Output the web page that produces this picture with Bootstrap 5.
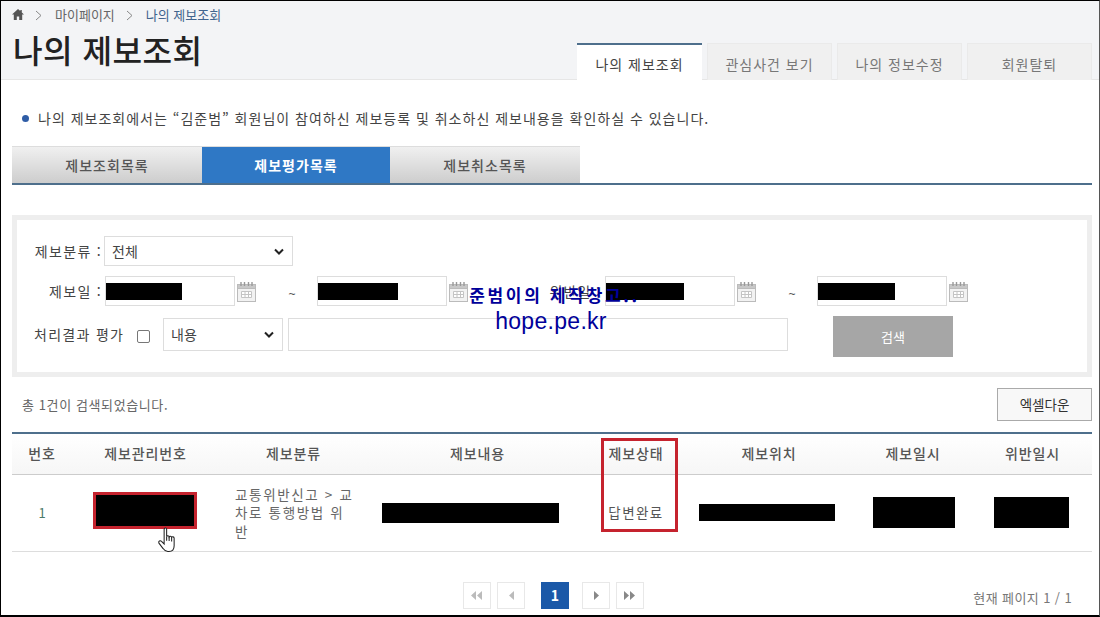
<!DOCTYPE html>
<html lang="ko">
<head>
<meta charset="UTF-8">
<title>나의 제보조회</title>
<link href="https://cdn.jsdelivr.net/npm/bootstrap@5.3.0/dist/css/bootstrap.min.css" rel="stylesheet">
<style>
html, body { margin: 0; height: 617px; overflow: hidden; background: #fff; }
body { font-family: "Noto Sans CJK KR", "Noto Sans", sans-serif; font-size: 14px; color: #444; }
.shot { height: 617px; border: 1px solid #000; border-right-color: #555; border-bottom-width: 2px; overflow: hidden; }

.top-head { height: 79px; background: #f3f4f6; border-bottom: 1px solid #e6e6e6; padding: 0 7px 0 11px; }
.crumbs { height: 27px; font-size: 13px; color: #666; padding-top: 4px; }
.crumbs .here { color: #41648e; }
.crumb-sep { margin: 5px 13px 0 11px; }
.page-title { font-size: 32.2px; font-weight: 500; color: #222; margin: 0; padding-left: 1px; line-height: 42px; letter-spacing: .4px; }
.top-tabs { gap: 5px; margin-top: 42px; }
.top-tab { width: 125px; height: 37px; background: #f0f0f0; border: 1px solid #eaeaea; border-bottom: 0; color: #777; font-size: 14px; letter-spacing: 1px; display: flex; align-items: center; justify-content: center; padding-top: 4px; text-decoration: none; }
.top-tab.on { background: #fff; border: 0; border-top: 2px solid #4e6f8c; color: #444; height: 38px; padding-top: 3px; }

.notice { margin: 26px 0 0 21px; height: 24px; font-size: 14px; letter-spacing: 1px; color: #444; }
.dot { width: 7px; height: 7px; border-radius: 50%; background: #2f5da6; margin-right: 9px; }

.sub-tabs { margin: 16px 7px 0 11px; border-bottom: 2px solid #4e6f8c; height: 39px; }
.sub-tab { width: 190px; height: 37px; background: linear-gradient(#f0f0f0, #cdcdcd); border-top: 1px solid #ddd; color: #555; font-size: 14px; font-weight: 500; letter-spacing: 1px; display: flex; align-items: center; justify-content: center; text-decoration: none; }
.sub-tab.on { width: 188px; background: #2f78c5; color: #fff; font-weight: 700; }

.search-box { margin: 30px 7px 0 11px; height: 162px; border: 5px solid #eee; padding: 16px 0 0 17px; font-size: 14px; color: #444; }
.field-row { height: 30px; margin-bottom: 10px; }
.field-row.tall { height: 37px; }
.field-label { width: 68px; margin-right: 3px; text-align: right; white-space: nowrap; letter-spacing: 1.300px; }
.field-label.wide { width: 103px; margin-right: 0; text-align: left; }
.search-box .form-select, .search-box .form-control { border-radius: 0; border-color: #ddd; font-size: 14px; color: #444; box-shadow: none; padding: 0 24px 0 7px; }
.search-box .form-select { background-image: url("data:image/svg+xml,%3Csvg xmlns='http://www.w3.org/2000/svg' viewBox='0 0 10 7'%3E%3Cpath d='M1 1.500l4 4 4-4' fill='none' stroke='%23222' stroke-width='2'/%3E%3C/svg%3E"); background-size: 10px 7px; background-position: right 8px center; }
.pick-kind { width: 189px; height: 30px; margin-left: -1px; }
.pick-text { width: 120px; height: 33px; margin-left: -1px; }
.search-box .form-check-input { width: 13px; height: 13px; margin: 3px 14px 0 0; border-radius: 2px; border-color: #777; flex: none; }
.word-input { width: 500px; height: 33px; margin-left: 5px; }
.date-box { width: 130px; height: 30px; }
.date-box .form-control { width: 130px; height: 30px; }
.date-mask { left: 1px; top: 7px; height: 17px; background: #000; }
.m76 { width: 76px; }
.m80 { width: 80px; }
.m78 { width: 78px; }
.m77 { width: 77px; }
.cal { margin-left: 2px; flex: none; }
.tilde { width: 61px; padding-left: 11px; padding-top: 6px; text-align: center; font-family: "Liberation Sans", sans-serif; font-size: 12px; color: #555; }
.gap-label { width: 137px; padding-right: 4px; text-align: right; white-space: nowrap; letter-spacing: 1px; }
.find-btn { width: 120px; height: 41px; margin-left: 45px; align-self: flex-start; background: #a6a6a6; color: #fff; border: 0; border-radius: 0; font-size: 13px; }

.result-bar { margin: 11px 7px 0 21px; height: 33px; font-size: 13px; letter-spacing: .6px; color: #666; }
.excel-btn { width: 95px; height: 33px; padding: 0; background: #f8f8f8; border: 1px solid #aaa; border-radius: 0; color: #333; font-size: 13.500px; }

.result-table { margin: 11px 7px 0 11px; width: 1080px; table-layout: fixed; border-top: 2px solid #4e6f8c; }
.result-table th { height: 41px; padding: 0; background: linear-gradient(#fff, #f6f6f6); border-bottom: 1px solid #ccc; text-align: center; vertical-align: middle; font-size: 14px; font-weight: 500; color: #555; letter-spacing: .9px; }
.result-table td { height: 77px; padding: 0; border-bottom: 1px solid #ddd; vertical-align: middle; text-align: center; font-size: 13px; color: #666; }
.c1 { width: 60px; } .c2 { width: 147px; } .c3 { width: 149px; } .c4 { width: 219px; }
.c5 { width: 98px; } .c6 { width: 168px; } .c7 { width: 120px; } .c8 { width: 119px; }
.result-table td.kind { text-align: left; padding: 0 13px 0 16px; line-height: 18.500px; font-size: 13.500px; letter-spacing: 1.650px; word-break: break-all; }
.result-table td.num { color: #4c7a6a; }
.result-table td.state { font-size: 13.500px; letter-spacing: 1.400px; color: #555; }
.no-mask { width: 104px; height: 37px; margin: -4px 0 0 21px; background: #000; border: 3px solid #c5232e; }
.mask { background: #000; }
.mk4 { width: 177px; height: 20px; margin-left: 14px; }
.mk6 { width: 136px; height: 17px; margin-left: 14px; }
.mk7 { width: 82px; height: 31px; margin-left: 20px; }
.mk8 { width: 75px; height: 31px; margin-left: 21px; }

.pager-row { margin: 30px 7px 0 0; height: 28px; }
.pager-row .pagination { margin: 0 0 0 462px; gap: 6px; }
.pager-row .page-item .page-link { width: 28px; height: 27px; padding: 0; border-radius: 0; border: 1px solid #e8e8e8; margin: 0; color: #888; background: #fff; display: flex; align-items: center; justify-content: center; }
.pager-row .page-item.active .page-link { background: #1b59a8; border-color: #1b59a8; color: #fff; font-weight: 700; font-size: 14px; }
.pager-row .page-item.active { margin: 0 7px 0 10px; }
.page-count { margin-left: auto; padding: 5px 20px 0 0; font-size: 13px; color: #777; letter-spacing: .4px; }

/* things laid over the page afterwards */
.red-frame { left: 600px; top: 437px; width: 77px; height: 94px; border: 3px solid #c5232e; }
.hand { left: 156px; top: 526px; }
.stamp { left: 440px; top: 280px; width: 220px; text-align: center; color: #00009a; pointer-events: none; }
.stamp-ko { font-size: 17px; font-weight: 700; line-height: 27px; letter-spacing: 2.700px; white-space: nowrap; padding-left: 7px; }
.stamp-en { font-family: "Liberation Sans", sans-serif; font-size: 23px; line-height: 26px; letter-spacing: .3px; }
</style>
</head>
<body>
<svg width="0" height="0" class="position-absolute">
  <symbol id="cal" viewBox="0 0 19 21">
    <rect x=".5" y="3.5" width="18" height="17" fill="#f2f2f2" stroke="#bbb"/>
    <rect x=".5" y="3.5" width="18" height="4" fill="#c8c8c8" stroke="#bbb"/>
    <path d="M4 1v4M7.5 1v4M11.500 1v4M15 1v4" stroke="#999" stroke-width="1.400"/>
    <path d="M4.500 10.500h10v6h-10zM4.500 13.500h10M8 10.500v6M11.500 10.500v6" fill="#fff" stroke="#c4c4c4"/>
  </symbol>
</svg>

<div class="shot position-relative">
  <header class="top-head d-flex justify-content-between">
    <div>
      <div class="crumbs d-flex align-items-start">
        <svg width="12" height="11" viewBox="0 0 12 11" class="mt-1"><path d="M6 0 0 5.600h1.800V11h3V7.500h2.400V11h3V5.600H12L9.800 3.500V1H8.300v1.100z" fill="#555"/></svg>
        <svg class="crumb-sep" width="7" height="11" viewBox="0 0 7 11"><path d="M1 1l5 4.500-5 4.500" fill="none" stroke="#888"/></svg>
        <span>마이페이지</span>
        <svg class="crumb-sep" width="7" height="11" viewBox="0 0 7 11"><path d="M1 1l5 4.500-5 4.500" fill="none" stroke="#888"/></svg>
        <span class="here">나의 제보조회</span>
      </div>
      <h1 class="page-title">나의 제보조회</h1>
    </div>
    <nav class="top-tabs d-flex">
      <a class="top-tab on" href="#">나의 제보조회</a>
      <a class="top-tab" href="#">관심사건 보기</a>
      <a class="top-tab" href="#">나의 정보수정</a>
      <a class="top-tab" href="#">회원탈퇴</a>
    </nav>
  </header>

  <p class="notice d-flex align-items-center mb-0"><span class="dot"></span>나의 제보조회에서는 “김준범” 회원님이 참여하신 제보등록 및 취소하신 제보내용을 확인하실 수 있습니다.</p>

  <nav class="sub-tabs d-flex">
    <a class="sub-tab" href="#">제보조회목록</a>
    <a class="sub-tab on" href="#">제보평가목록</a>
    <a class="sub-tab" href="#">제보취소목록</a>
  </nav>

  <form class="search-box">
    <div class="field-row d-flex align-items-center">
      <label class="field-label">제보분류 :</label>
      <select class="form-select pick-kind"><option>전체</option></select>
    </div>
    <div class="field-row d-flex align-items-center">
      <label class="field-label">제보일 :</label>
      <div class="date-box position-relative"><input class="form-control" type="text"><span class="date-mask m76 position-absolute"></span></div>
      <svg class="cal" width="19" height="21"><use href="#cal"/></svg>
      <span class="tilde">~</span>
      <div class="date-box position-relative"><input class="form-control" type="text"><span class="date-mask m80 position-absolute"></span></div>
      <svg class="cal" width="19" height="21"><use href="#cal"/></svg>
      <label class="gap-label">위반일 :</label>
      <div class="date-box position-relative"><input class="form-control" type="text"><span class="date-mask m78 position-absolute"></span></div>
      <svg class="cal" width="19" height="21"><use href="#cal"/></svg>
      <span class="tilde">~</span>
      <div class="date-box position-relative"><input class="form-control" type="text"><span class="date-mask m77 position-absolute"></span></div>
      <svg class="cal" width="19" height="21"><use href="#cal"/></svg>
    </div>
    <div class="field-row tall d-flex align-items-center">
      <label class="field-label wide">처리결과 평가</label>
      <input class="form-check-input" type="checkbox">
      <select class="form-select pick-text"><option>내용</option></select>
      <input class="form-control word-input" type="text">
      <button class="btn find-btn" type="button">검색</button>
    </div>
  </form>

  <div class="result-bar d-flex justify-content-between align-items-center">
    <span>총 1건이 검색되었습니다.</span>
    <button class="btn excel-btn" type="button">엑셀다운</button>
  </div>

  <table class="result-table">
    <colgroup>
      <col class="c1"><col class="c2"><col class="c3"><col class="c4">
      <col class="c5"><col class="c6"><col class="c7"><col class="c8">
    </colgroup>
    <thead>
      <tr><th>번호</th><th>제보관리번호</th><th>제보분류</th><th>제보내용</th><th>제보상태</th><th>제보위치</th><th>제보일시</th><th>위반일시</th></tr>
    </thead>
    <tbody>
      <tr>
        <td class="num">1</td>
        <td><div class="no-mask"></div></td>
        <td class="kind">교통위반신고 &gt; 교차로 통행방법 위반</td>
        <td><div class="mask mk4"></div></td>
        <td class="state">답변완료</td>
        <td><div class="mask mk6"></div></td>
        <td><div class="mask mk7"></div></td>
        <td><div class="mask mk8"></div></td>
      </tr>
    </tbody>
  </table>

  <div class="pager-row d-flex align-items-center">
    <ul class="pagination">
      <li class="page-item"><a class="page-link" href="#"><svg width="12" height="9" viewBox="0 0 12 9"><path d="M5 0v9L0 4.500zM11 0v9L6 4.500z" fill="#bbb"/></svg></a></li>
      <li class="page-item"><a class="page-link" href="#"><svg width="5" height="9" viewBox="0 0 5 9"><path d="M5 0v9L0 4.500z" fill="#bbb"/></svg></a></li>
      <li class="page-item active"><a class="page-link" href="#">1</a></li>
      <li class="page-item"><a class="page-link" href="#"><svg width="5" height="9" viewBox="0 0 5 9"><path d="M0 0v9l5-4.500z" fill="#888"/></svg></a></li>
      <li class="page-item"><a class="page-link" href="#"><svg width="12" height="9" viewBox="0 0 12 9"><path d="M0 0v9l5-4.500zM6 0v9l5-4.500z" fill="#888"/></svg></a></li>
    </ul>
    <span class="page-count">현재 페이지 1 / 1</span>
  </div>

  <div class="red-frame position-absolute"></div>
  <svg class="hand position-absolute" width="20" height="25" viewBox="0 0 17.500 24"><path d="M6 2.200c0-1.600 2.400-1.600 2.400 0v7c.3-1 2.200-1 2.400.3.400-1 2.200-.9 2.400.4.500-.8 2.300-.6 2.400.8v7.300c0 3.300-2 5.500-5 5.500H9.500c-2.200 0-3.300-1-4.500-2.800L1 15.500c-.9-1.700 1.200-3.100 2.500-1.700L6 16.300z" fill="#fff" stroke="#222" stroke-width="1"/><path d="M8.400 9.200v4M10.800 9.500v4M13.200 10v4" stroke="#222" fill="none"/></svg>
  <div class="stamp position-absolute">
    <div class="stamp-ko">준범이의 제작창고..</div>
    <div class="stamp-en">hope.pe.kr</div>
  </div>
</div>
<script src="https://cdn.jsdelivr.net/npm/bootstrap@5.3.0/dist/js/bootstrap.bundle.min.js"></script>
</body>
</html>
